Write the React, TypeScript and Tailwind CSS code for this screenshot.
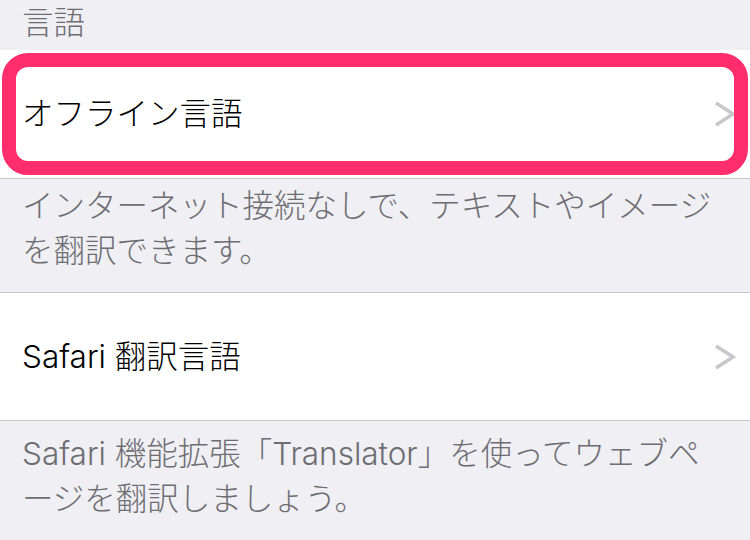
import React from "react";

const font = { fontFamily: 'Inter, "Noto Sans CJK JP", sans-serif' };

const Chevron = () => (
  <svg width="24" height="26" viewBox="0 0 24 26" className="shrink-0">
    <polyline
      points="3,2 20,13 3,24"
      fill="none"
      stroke="#c7c7cc"
      strokeWidth="3.5"
      strokeLinejoin="miter"
    />
  </svg>
);

interface RowProps {
  label: string;
  highlight?: boolean;
  topBorder?: boolean;
}

const Row: React.FC<RowProps> = ({ label, highlight, topBorder }) => (
  <div
    className={
      "relative flex h-[129px] items-center justify-between bg-white pl-[22px] pr-[13px] border-b border-[#c8c7cc]" +
      (topBorder ? " border-t" : "")
    }
  >
    <span className="text-[31.5px] leading-none text-black">{label}</span>
    <Chevron />
    {highlight && (
      <div className="absolute left-[2px] right-[2px] top-[3px] bottom-[3px] rounded-[26px] border-[14px] border-[#fe2d6c]" />
    )}
  </div>
);

const Footer: React.FC<{ lines: string[]; className?: string }> = ({
  lines,
  className,
}) => (
  <div
    className={
      "pl-[22px] text-[31.5px] leading-[45px] text-[#6d6d72] whitespace-nowrap " +
      (className ?? "")
    }
  >
    {lines.map((l, i) => (
      <div key={i}>{l}</div>
    ))}
  </div>
);

export default function App() {
  return (
    <div
      className="h-[540px] w-[750px] overflow-hidden bg-[#efeff4] font-light"
      style={font}
    >
      <div className="h-[50px] pl-[22px] text-[31.5px] leading-[45px] text-[#6d6d72]">
        言語
      </div>
      <Row label="オフライン言語" highlight />
      <Footer
        lines={["インターネット接続なしで、テキストやイメージ", "を翻訳できます。"]}
        className="h-[113px] pt-[4px]"
      />
      <Row label="Safari 翻訳言語" topBorder />
      <Footer
        lines={["Safari 機能拡張「Translator」を使ってウェブペ", "ージを翻訳しましょう。"]}
        className="pt-[10px]"
      />
    </div>
  );
}
